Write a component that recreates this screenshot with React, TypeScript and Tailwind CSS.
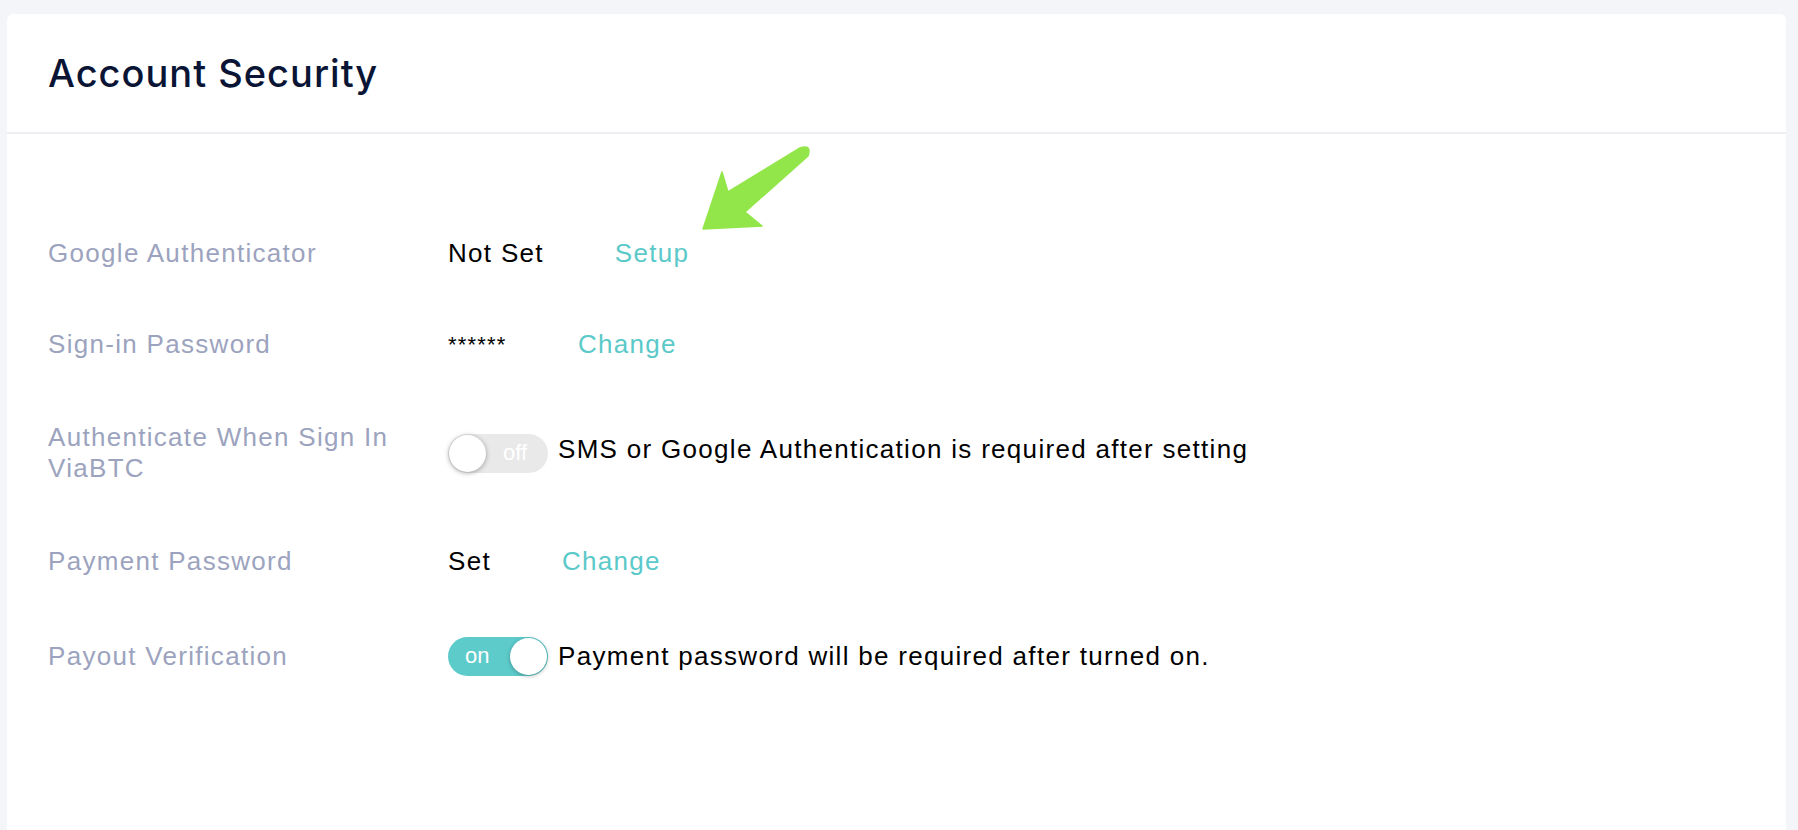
import React from "react";

const font = { fontFamily: '"Liberation Sans", Arial, sans-serif' };

function Toggle({ on }: { on: boolean }) {
  if (on) {
    return (
      <div className="relative flex h-[39px] w-[100px] shrink-0 items-center rounded-full bg-[#5ecbcb]">
        <span className="ml-[17px] text-[22px] leading-none tracking-normal text-white">on</span>
        <div className="absolute right-[1px] top-[1px] h-[37px] w-[37px] rounded-full bg-white shadow-[0_1px_4px_rgba(0,0,0,0.3)]" />
      </div>
    );
  }
  return (
    <div className="relative flex h-[39px] w-[100px] shrink-0 items-center justify-end rounded-full bg-[#e9e9e9]">
      <span className="mr-[21px] text-[22px] leading-none tracking-normal text-white">off</span>
      <div className="absolute left-[1px] top-[1px] h-[37px] w-[37px] rounded-full bg-white shadow-[0_1px_5px_rgba(0,0,0,0.35)]" />
    </div>
  );
}

export default function App() {
  return (
    <div className="min-h-[830px] w-full bg-[#f4f5f9] pt-[14px]" style={font}>
      <div className="relative ml-[7px] min-h-[816px] w-[1779px] rounded-t-[6px] bg-white">
        <div className="flex h-[120px] items-center border-b-2 border-[#eeeff2] pl-[41px]">
          <h1
            className="text-[38px] font-medium leading-[38px] tracking-[1px] text-[#0a1435]"
            style={{ fontFamily: 'Inter, "Liberation Sans", sans-serif' }}
          >
            Account Security
          </h1>
        </div>

        <div className="pl-[41px] pt-[99px] text-[26px] leading-[31px] tracking-[1.3px]">
          <div className="flex h-[40px] items-center">
            <div className="w-[400px] shrink-0 text-[#9ca3be]">Google Authenticator</div>
            <span className="text-black">Not Set</span>
            <span className="ml-[71px] text-[#5bc9c9]">Setup</span>
          </div>

          <div className="mt-[51px] flex h-[40px] items-center">
            <div className="w-[400px] shrink-0 text-[#9ca3be]">Sign-in Password</div>
            <span className="w-[58px] text-[22px] tracking-[1.2px] text-black">******</span>
            <span className="ml-[72px] text-[#5bc9c9]">Change</span>
          </div>

          <div className="mt-[58px] flex h-[62px] items-center">
            <div className="w-[400px] shrink-0 pr-[10px] text-[#9ca3be]">
              Authenticate When Sign In ViaBTC
            </div>
            <Toggle on={false} />
            <span className="mb-[8px] ml-[10px] text-black">
              SMS or Google Authentication is required after setting
            </span>
          </div>

          <div className="mt-[57px] flex h-[40px] items-center">
            <div className="w-[400px] shrink-0 text-[#9ca3be]">Payment Password</div>
            <span className="text-black">Set</span>
            <span className="ml-[71px] text-[#5bc9c9]">Change</span>
          </div>

          <div className="mt-[55px] flex h-[40px] items-center">
            <div className="w-[400px] shrink-0 text-[#9ca3be]">Payout Verification</div>
            <Toggle on={true} />
            <span className="ml-[10px] text-black">
              Payment password will be required after turned on.
            </span>
          </div>
        </div>

        <svg
          className="absolute left-[683px] top-[126px]"
          width="130"
          height="100"
          viewBox="0 0 130 100"
        >
          <path
            d="M 38 52 L 110 8 Q 122 4 118 16 L 55 72 L 72 86 L 13 89 L 32 32 Z"
            fill="#93e64a"
            stroke="#93e64a"
            strokeWidth="1.5"
            strokeLinejoin="round"
          />
        </svg>
      </div>
    </div>
  );
}
